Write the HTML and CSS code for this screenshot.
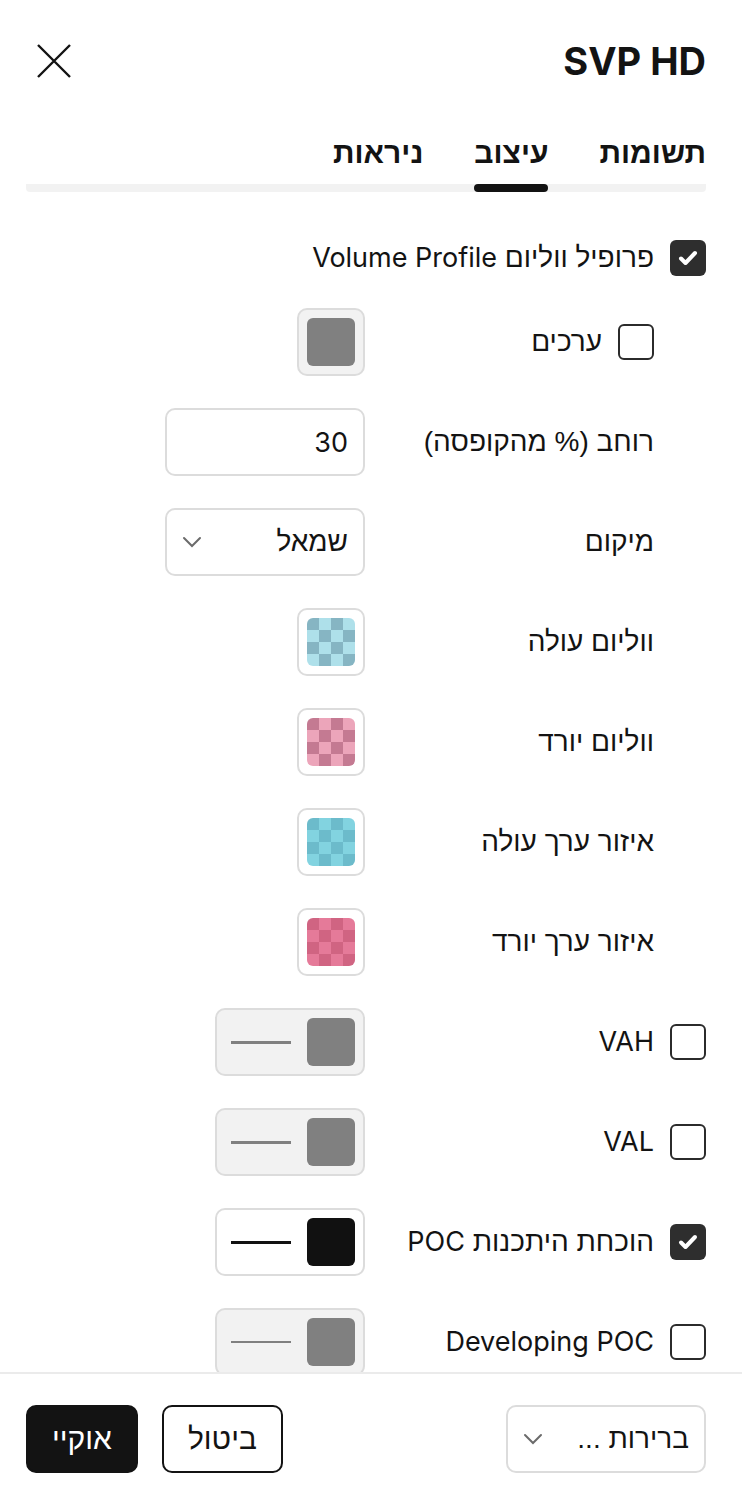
FILE: index.html
```html
<!DOCTYPE html>
<html lang="he" dir="rtl">
<head>
<meta charset="UTF-8">
<meta name="viewport" content="width=device-width, initial-scale=1.0">
<title>SVP HD</title>
<link rel="stylesheet" href="styles.css">
</head>
<body>

<div class="dialog">
    <header class="header">
        <h1 class="title latin">SVP HD</h1>
        <button class="close" aria-label="סגור">
            <svg width="34" height="34" viewBox="0 0 34 34"><path d="M1 1L33 33M33 1L1 33" stroke="#131313" stroke-width="2.4" fill="none"/></svg>
        </button>
    </header>

    <nav class="tabs">
        <div class="tab"><span>תשומות</span><i class="tab-bar"></i></div>
        <div class="tab active"><span>עיצוב</span><i class="tab-bar"></i></div>
        <div class="tab"><span>ניראות</span><i class="tab-bar"></i></div>
    </nav>

    <div class="content">
        <div class="row row-short">
            <div class="field wide">
                <span class="checkbox checked"><svg width="36" height="36" viewBox="0 0 36 36"><path d="M11 18.5L15.5 23L25 13" stroke="#fff" stroke-width="4" fill="none" stroke-linecap="round" stroke-linejoin="round"/></svg></span>
                <span class="label">פרופיל ווליום <span class="latin">Volume Profile</span></span>
            </div>
        </div>

        <div class="row">
            <div class="field sub">
                <span class="checkbox"></span>
                <span class="label">ערכים</span>
            </div>
            <div class="swatch off"><span class="chip gray"></span></div>
        </div>

        <div class="row">
            <div class="field plain"><span class="label">רוחב (% מהקופסה)</span></div>
            <div class="input latin">30</div>
        </div>

        <div class="row">
            <div class="field plain"><span class="label">מיקום</span></div>
            <div class="select">
                <span>שמאל</span>
                <svg class="chevron" width="20" height="12" viewBox="0 0 20 12"><path d="M2 2L10 10L18 2" stroke="#6b6b6b" stroke-width="2" fill="none" stroke-linecap="round"/></svg>
            </div>
        </div>

        <div class="row">
            <div class="field plain"><span class="label">ווליום עולה</span></div>
            <div class="swatch"><span class="chip checker vol-up"></span></div>
        </div>

        <div class="row">
            <div class="field plain"><span class="label">ווליום יורד</span></div>
            <div class="swatch"><span class="chip checker vol-down"></span></div>
        </div>

        <div class="row">
            <div class="field plain"><span class="label">איזור ערך עולה</span></div>
            <div class="swatch"><span class="chip checker va-up"></span></div>
        </div>

        <div class="row">
            <div class="field plain"><span class="label">איזור ערך יורד</span></div>
            <div class="swatch"><span class="chip checker va-down"></span></div>
        </div>

        <div class="row">
            <div class="field">
                <span class="checkbox"></span>
                <span class="label latin">VAH</span>
            </div>
            <div class="line-swatch off"><span class="chip gray"></span><span class="line gray"></span></div>
        </div>

        <div class="row">
            <div class="field">
                <span class="checkbox"></span>
                <span class="label latin">VAL</span>
            </div>
            <div class="line-swatch off"><span class="chip gray"></span><span class="line gray"></span></div>
        </div>

        <div class="row">
            <div class="field">
                <span class="checkbox checked"><svg width="36" height="36" viewBox="0 0 36 36"><path d="M11 18.5L15.5 23L25 13" stroke="#fff" stroke-width="4" fill="none" stroke-linecap="round" stroke-linejoin="round"/></svg></span>
                <span class="label">הוכחת היתכנות <span class="latin">POC</span></span>
            </div>
            <div class="line-swatch"><span class="chip black"></span><span class="line black"></span></div>
        </div>

        <div class="row">
            <div class="field">
                <span class="checkbox"></span>
                <span class="label latin">Developing POC</span>
            </div>
            <div class="line-swatch off"><span class="chip gray"></span><span class="line gray thin"></span></div>
        </div>
    </div>

    <footer class="footer">
        <div class="select defaults">
            <span>ברירות ...</span>
            <svg class="chevron" width="20" height="12" viewBox="0 0 20 12"><path d="M2 2L10 10L18 2" stroke="#6b6b6b" stroke-width="2" fill="none" stroke-linecap="round"/></svg>
        </div>
        <div class="actions">
            <button class="btn btn-outline">ביטול</button>
            <button class="btn btn-primary">אוקיי</button>
        </div>
    </footer>
</div>

</body>
</html>
```

FILE: styles.css
```css
* {
    box-sizing: border-box;
}
body {
    margin: 0;
    font-family: "Liberation Sans", Arial, sans-serif;
    color: #131313;
    background: #fff;
}
.latin {
    font-family: Inter, "Liberation Sans", sans-serif;
}
.dialog {
    width: 742px;
    height: 1496px;
    display: flex;
    flex-direction: column;
    overflow: hidden;
}

/* header */
.header {
    height: 98px;
    padding: 24px 36px 0 26px;
    display: flex;
    align-items: center;
    justify-content: space-between;
}
.title {
    margin: 0;
    font-size: 38px;
    font-weight: 700;
    line-height: 74px;
}
.close {
    width: 56px;
    height: 56px;
    border: none;
    background: none;
    padding: 0;
    display: flex;
    align-items: center;
    justify-content: center;
}

/* tabs */
.tabs {
    margin: 37px 36px 0 26px;
    display: flex;
    gap: 51px;
    background: linear-gradient(#f2f2f2, #f2f2f2) bottom / 100% 8px no-repeat;
    border-radius: 4px;
}
.tab {
    display: flex;
    flex-direction: column;
    gap: 13px;
    font-size: 30px;
    font-weight: 700;
    line-height: 36px;
}
.tab-bar {
    display: block;
    height: 8px;
    border-radius: 4px;
}
.tab.active .tab-bar {
    background: #131313;
}

/* rows */
.content {
    flex: 1;
    overflow: hidden;
    padding: 48px 36px 0 26px;
    display: flex;
    flex-direction: column;
    gap: 32px;
}
.row {
    display: flex;
    align-items: center;
    height: 68px;
    flex: none;
}
.row-short {
    height: 36px;
}
.field {
    width: 341px;
    flex: none;
    display: flex;
    align-items: center;
    gap: 16px;
}
.field.wide {
    width: auto;
}
.field.plain,
.field.sub {
    padding-right: 52px;
}
.label {
    font-size: 28px;
    line-height: 36px;
    white-space: nowrap;
}
.label .latin,
.label.latin {
    font-size: 27px;
}
.checkbox {
    width: 36px;
    height: 36px;
    flex: none;
    border: 2px solid #2b2b2b;
    border-radius: 6px;
    display: flex;
}
.checkbox.checked {
    background: #2e2e2e;
    border: none;
}

/* controls */
.swatch {
    width: 68px;
    height: 68px;
    padding: 8px;
    border: 2px solid #dcdcdc;
    border-radius: 10px;
    background: #fff;
}
.swatch.off,
.line-swatch.off {
    background: #f2f2f2;
}
.chip {
    display: block;
    width: 48px;
    height: 48px;
    border-radius: 6px;
    flex: none;
}
.chip.gray {
    background: #808080;
}
.chip.black {
    background: #111;
}
.chip.checker {
    background: repeating-conic-gradient(var(--light) 0 25%, var(--dark) 0 50%) 0 0 / 24px 24px;
}
.vol-up {
    --light: #aee0ea;
    --dark: #86b5c3;
}
.vol-down {
    --light: #eca5ba;
    --dark: #c47a92;
}
.va-up {
    --light: #82d3e0;
    --dark: #6cbbcb;
}
.va-down {
    --light: #e57a99;
    --dark: #d06482;
}
.line-swatch {
    width: 150px;
    height: 68px;
    padding: 8px 8px 8px 14px;
    border: 2px solid #dcdcdc;
    border-radius: 10px;
    background: #fff;
    display: flex;
    align-items: center;
    gap: 16px;
}
.line {
    display: block;
    width: 60px;
    height: 3px;
}
.line.gray {
    background: #808080;
}
.line.black {
    background: #111;
}
.line.thin {
    height: 2px;
}
.input,
.select {
    width: 200px;
    height: 68px;
    border: 2px solid #dcdcdc;
    border-radius: 10px;
    padding: 0 15px;
    display: flex;
    align-items: center;
    font-size: 28px;
}
.input.latin {
    font-size: 27px;
}
.select {
    justify-content: space-between;
}

/* footer */
.footer {
    flex: none;
    border-top: 2px solid #ebebeb;
    padding: 31px 36px 23px 26px;
    display: flex;
    justify-content: space-between;
    align-items: center;
}
.actions {
    display: flex;
    gap: 24px;
}
.btn {
    height: 68px;
    border-radius: 10px;
    font-family: inherit;
    font-size: 30px;
    padding: 0 24px;
}
.btn-outline {
    background: #fff;
    border: 2px solid #131313;
    color: #131313;
}
.btn-primary {
    background: #131313;
    border: 2px solid #131313;
    color: #fff;
}
```
